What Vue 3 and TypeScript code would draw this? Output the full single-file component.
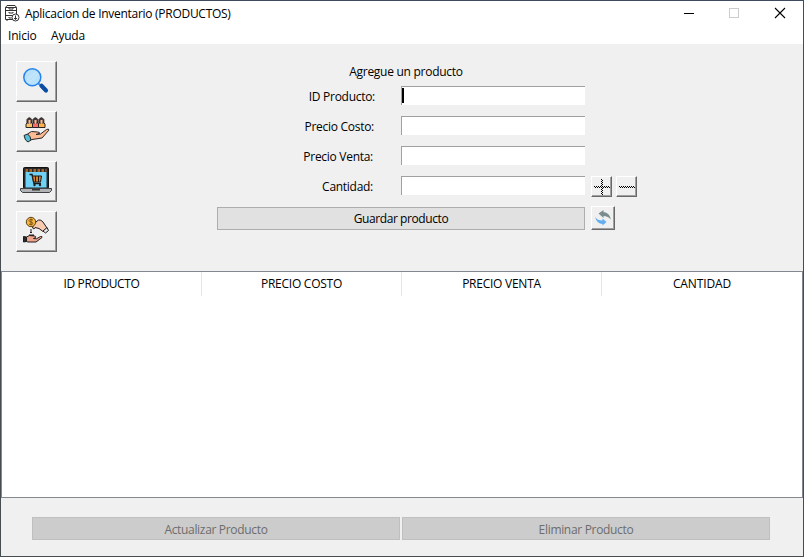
<script setup lang="ts">
import { ref } from 'vue'

interface Field { key: string; label: string; cls: string }

const fields: Field[] = [
  { key: 'id', label: 'ID Producto:', cls: 'l-id' },
  { key: 'costo', label: 'Precio Costo:', cls: 'l-costo' },
  { key: 'venta', label: 'Precio Venta:', cls: 'l-venta' },
  { key: 'cantidad', label: 'Cantidad:', cls: 'l-cantidad' },
]
const columns: { title: string; cls: string }[] = [
  { title: 'ID PRODUCTO', cls: 'c-id' },
  { title: 'PRECIO COSTO', cls: 'c-costo' },
  { title: 'PRECIO VENTA', cls: 'c-venta' },
  { title: 'CANTIDAD', cls: 'c-cantidad' },
]
const values = ref<Record<string, string>>({ id: '', costo: '', venta: '', cantidad: '' })
</script>

<template>
  <div class="window">
    <header class="titlebar">
      <svg class="appicon" width="16" height="17" viewBox="0 0 16 17" fill="none" stroke="#333" stroke-width="1">
        <path d="M9 14.500H1.500V2.500l1.500-2h8l1.500 2V9M1.500 5.500h11M1.500 10.500h7M3 14.500v1.500M1.500 2.500h11" />
        <path d="M5 3v1h4V3M5 7v1h4V7M5 12v1h2.500" />
        <circle cx="11.500" cy="12.500" r="3.500" fill="#fff" />
        <path d="M11.500 10.500v4M10 13l1.500 1.500L13 13" />
      </svg>
      <span class="title">Aplicacion de Inventario (PRODUCTOS)</span>
      <svg class="controls" width="138" height="24" viewBox="0 0 138 24" fill="none">
        <path d="M18 12.500h10" stroke="#000" />
        <rect x="63.500" y="7.500" width="9" height="9" stroke="#ccc" />
        <path d="M109 7l10 10M119 7l-10 10" stroke="#000" stroke-width="1.100" />
      </svg>
    </header>
    <nav class="menu"><span class="m-inicio">Inicio</span><span class="m-ayuda">Ayuda</span></nav>

    <main class="form">
      <aside class="tools">
        <button class="raised tool" aria-label="Buscar">
          <svg width="32" height="32" viewBox="0 0 32 32">
            <path d="M18 18l3.500 3.500" stroke="#4a9be8" stroke-width="2" />
            <path d="M21.500 20.800l4.500 4.700" stroke="#0b4da2" stroke-width="4.200" stroke-linecap="round" />
            <circle cx="12.300" cy="12.300" r="8.500" fill="#b9e1f9" stroke="#2484ed" stroke-width="1.500" />
            <path d="M7 15l9-8M9 18l9-9" stroke="#c6e7fb" stroke-width="1.200" />
          </svg>
        </button>
        <button class="raised tool" aria-label="Clientes">
          <svg width="32" height="32" viewBox="0 0 32 32" stroke="#292425" stroke-width="1" stroke-linejoin="round">
            <path d="M6 12.500V9l2-2h3l1.500 1.500v4z" fill="#ffc366" />
            <path d="M12.500 12.500V8.500L14 7h3l1.500 1.500v4z" fill="#fb6b65" />
            <path d="M18.500 12.500V8.500L20 7h3l2 2v3.500z" fill="#ffae48" />
            <path d="M7 8V4.500q2.300-3.500 4.700 0V8zM13 8V4.500q2.400-3.500 4.800 0V8zM19 8V4.500q2.400-3.500 4.800 0V8z" fill="#4b3935" />
            <path d="M8.500 5h2v3l-1 1-1-1zM14.500 5h2v3l-1 1-1-1zM20.500 5h2v3l-1 1-1-1z" fill="#fdbb94" stroke="none" />
            <path d="M7.500 19l4-2.500 6 .5q2.500 0 2 1.500l-3.500 1 4.500-.5 6-4.500q2.500-1 2.500.5l-7 8-10 1.500-2.500 1z" fill="#fdbb94" />
            <path d="M4 20.500l3.500-1.500q3 2 3.500 6l-3 2q-3-1-4-6.500z" fill="#55bfd5" />
          </svg>
        </button>
        <button class="raised tool" aria-label="Ventas">
          <svg width="32" height="32" viewBox="0 0 32 32">
            <rect x="3.500" y="2.500" width="25" height="21" rx="1" fill="#27272a" stroke="#111" />
            <rect x="5.500" y="7" width="21" height="15.500" fill="#70d1f6" />
            <path d="M5.500 5.500h21" stroke="#a5642a" stroke-width="3" stroke-dasharray="2.500 1.500" />
            <path d="M9.500 9.500h2.500l2 9h7" fill="none" stroke="#191919" stroke-width="1.400" />
            <path d="M12.500 11h9l-1 6h-7z" fill="#d4812e" stroke="#211a16" stroke-width="1" />
            <path d="M15.500 11v6M18.500 11v6" stroke="#211a16" />
            <circle cx="14.500" cy="20" r="1.200" fill="#222" /><circle cx="20" cy="20" r="1.200" fill="#222" />
            <path d="M.5 23.500h31v2l-2 2h-27l-2-2z" fill="#b0b2b6" stroke="#404144" />
            <path d="M12 24h8v1.500h-8z" fill="#333" />
          </svg>
        </button>
        <button class="raised tool" aria-label="Pagos">
          <svg width="32" height="32" viewBox="0 0 32 32" stroke="#211d1c" stroke-width="1" stroke-linejoin="round">
            <path d="M14 8.500l4.500-3.500q2.500-.5 4.500 2l4 6-4 3.500-4-3-4-1-1 1.500-1.500-1z" fill="#f7cbb0" />
            <path d="M23 16l4-3.500 1.500 3-3 2.500z" fill="#e5e5e5" />
            <circle cx="11" cy="7" r="4.700" fill="#f7b63d" stroke="#5e421d" />
            <path d="M13 5q-4-1.500-4 .5 0 1 2 1.500 2 .5 2 1.500 0 1.500-4 .7M11 3.500v7" fill="none" stroke="#7a531b" />
            <path d="M11 14v4M10 17l1 1 1-1" fill="none" />
            <path d="M9 20.500h5" stroke-width="2" />
            <path d="M6.500 22l3-1.500 5 .5q2 .5 1 1.700l-2 .8 3 .3 4-2.300q2-.5 1.500 1l-6 4.500h-8l-1.500-.5z" fill="#eea58c" />
            <path d="M3.500 21.500l3 .5v4.500l-3 .5z" fill="#29292c" />
          </svg>
        </button>
      </aside>

      <section class="entryform">
        <h1>Agregue un producto</h1>
        <div v-for="f in fields" :key="f.key" class="row">
          <label :for="f.key" :class="f.cls">{{ f.label }}</label>
          <div class="entry">
            <i v-if="f.key === 'id'" class="caret"></i>
            <input :id="f.key" v-model="values[f.key]" type="text" />
          </div>
          <template v-if="f.key === 'cantidad'">
            <button class="raised step" aria-label="Sumar">
              <svg width="17" height="17" viewBox="0 0 17 17" fill="none" stroke="#000" stroke-dasharray="1 1" shape-rendering="crispEdges"><path d="M1 8.500h16M8.500 1v16" /><path d="M2 9.500h15M9.500 2v15" /></svg>
            </button>
            <button class="raised step" aria-label="Restar">
              <svg width="17" height="17" viewBox="0 0 17 17" fill="none" stroke="#000" stroke-dasharray="1 1" shape-rendering="crispEdges"><path d="M1 8.500h16M2 9.500h15" /></svg>
            </button>
          </template>
        </div>
        <div class="saverow">
          <button class="flat save">Guardar producto</button>
          <button class="raised refresh" aria-label="Refrescar">
            <svg width="20" height="20" viewBox="0 0 20 20">
              <path d="M5.500 5.500l5-3.500v2q6 .5 7.500 7.500-3-3.500-7.500-3.500v2z" fill="#7b8d90" />
              <path d="M13.500 14l-4 3.500v-1.500q-5.500 0-7.500-7 2.500 3.500 7.500 3.500v-2z" fill="#62aeef" />
            </svg>
          </button>
        </div>
      </section>
    </main>

    <section class="tree">
      <div v-for="c in columns" :key="c.title" class="col" :class="c.cls">{{ c.title }}</div>
    </section>

    <footer class="actions">
      <button class="flat" disabled>Actualizar Producto</button>
      <button class="flat" disabled>Eliminar Producto</button>
    </footer>
  </div>
</template>

<style>
body { margin: 0; overflow: hidden; }
</style>

<style scoped>
.window {
  box-sizing: border-box;
  width: 804px;
  height: 557px;
  display: flex;
  flex-direction: column;
  border: 1px solid #454d50;
  border-top-color: #3c4c5e;
  background: #f0f0f0;
  color: #000;
  font: 12px/16px "Open Sans", "Noto Sans", sans-serif;
  white-space: nowrap;
}
button { box-sizing: border-box; margin: 0; padding: 0; font: inherit; color: inherit; }
svg { display: block; flex: none; }
.titlebar { height: 24px; flex: none; display: flex; align-items: center; background: #fff; }
.appicon { margin-left: 3px; }
.title { margin-left: 5px; padding-top: 1px; letter-spacing: -0.28px; }
.controls { margin-left: auto; margin-right: -1px; }
.menu { height: 19px; box-sizing: border-box; flex: none; display: flex; padding: 3px 0 0 7px; background: #fff; letter-spacing: -0.2px; }
.m-inicio { width: 43px; }
.form { height: 227px; flex: none; display: flex; }
.tools { width: 41px; padding: 17px 0 0 15px; display: flex; flex-direction: column; gap: 9px; }
.raised {
  display: flex;
  align-items: center;
  justify-content: center;
  border: 1px solid #696969;
  border-top-color: #fff;
  border-left-color: #fff;
  background: #f0f0f0;
  box-shadow: inset -1px -1px #a0a0a0;
}
.tool { width: 41px; height: 41px; padding: 0 1px 1px 0; }
.entryform { margin-left: 160px; padding-top: 20px; }
h1 { margin: 0 0 6px; padding-left: 10px; width: 368px; box-sizing: border-box; text-align: center; font: inherit; letter-spacing: -0.27px; }
.row { display: flex; height: 21px; margin-bottom: 9px; }
.row label { width: 184px; box-sizing: border-box; padding: 3px 26px 0 0; text-align: right; letter-spacing: -0.28px; }
.row .l-costo { padding-right: 27px; }
.row .l-venta,
.row .l-cantidad { padding-right: 28px; }
.entry {
  box-sizing: border-box;
  width: 184px;
  height: 19px;
  display: flex;
  border: solid #a0a0a0;
  border-width: 1px 0 0 1px;
  background: #fff;
}
.caret { width: 2px; height: 15px; margin-top: 1px; background: #000; }
.entry input { flex: 1; min-width: 0; padding: 0; border: 0; outline: 0; background: transparent; font: inherit; }
.step { width: 21px; height: 21px; margin-left: 6px; }
.step + .step { margin-left: 4px; }
.saverow { display: flex; align-items: center; gap: 6px; height: 24px; }
.flat { width: 368px; height: 23px; padding-top: 2px; border: 1px solid #adadad; background: #e1e1e1; line-height: 16px; letter-spacing: -0.32px; }
.save { letter-spacing: -0.42px; }
.flat:disabled { border-color: #bfbfbf; background: #ccc; color: #6d6d6d; }
.refresh { width: 24px; height: 24px; }
.tree {
  box-sizing: border-box;
  height: 227px;
  flex: none;
  display: grid;
  grid-template-columns: 200px 200px 200px 200px;
  border: 1px solid #828790;
  background: #fff;
}
.col { box-sizing: border-box; height: 24px; padding-top: 4px; border-right: 1px solid #e5e5e5; text-align: center; letter-spacing: -0.25px; }
.c-id { letter-spacing: -0.38px; }
.c-cantidad { letter-spacing: -0.12px; border-right: 0; }
.actions { display: flex; gap: 2px; padding: 19px 0 0 31px; }
</style>
